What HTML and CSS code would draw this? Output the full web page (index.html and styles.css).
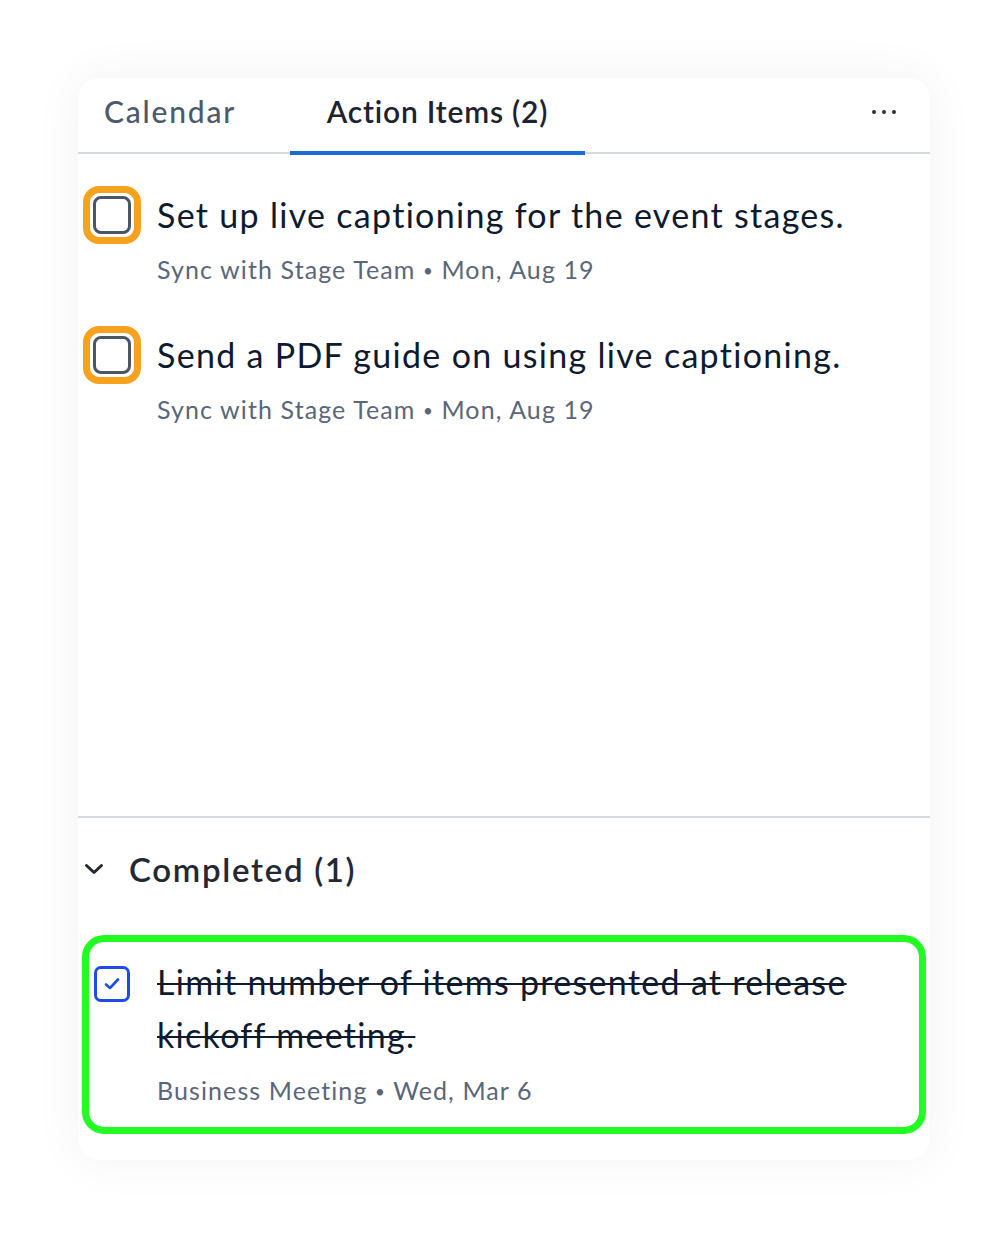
FILE: index.html
```html
<!DOCTYPE html>
<html lang="en">
<head>
<meta charset="utf-8">
<title>Action Items</title>
<link rel="stylesheet" href="styles.css">
</head>
<body>
<div class="card">
  <div class="tabs">
    <div class="tab tab-calendar">Calendar</div>
    <div class="tab tab-active">Action Items (2)</div>
    <div class="tabs-spacer"></div>
    <div class="more" aria-label="More"><span></span><span></span><span></span></div>
  </div>

  <div class="list">
    <div class="item">
      <div class="ring"><div class="box"></div></div>
      <div class="text">
        <div class="title">Set up live captioning for the event stages.</div>
        <div class="meta">Sync with Stage Team <span class="sep">•</span> Mon, Aug 19</div>
      </div>
    </div>
    <div class="item">
      <div class="ring"><div class="box"></div></div>
      <div class="text">
        <div class="title">Send a PDF guide on using live captioning.</div>
        <div class="meta">Sync with Stage Team <span class="sep">•</span> Mon, Aug 19</div>
      </div>
    </div>
  </div>

  <div class="completed">
    <div class="completed-head">
      <svg class="chevron" width="20" height="12" viewBox="0 0 20 12"><path d="M2.5 2.5 L10 9.5 L17.5 2.5" fill="none" stroke="#232833" stroke-width="3" stroke-linecap="round" stroke-linejoin="round"/></svg>
      <span>Completed (1)</span>
    </div>
    <div class="done-frame">
      <div class="done-item">
        <div class="box box-checked">
          <svg width="18" height="16" viewBox="0 0 18 16"><path d="M3 8.5 L7 12 L15 3.5" fill="none" stroke="#1f4be6" stroke-width="2.6" stroke-linecap="round" stroke-linejoin="round"/></svg>
        </div>
        <div class="text">
          <div class="title title-done">Limit number of items presented at release kickoff meeting.</div>
          <div class="meta meta-done">Business Meeting <span class="sep">•</span> Wed, Mar 6</div>
        </div>
      </div>
    </div>
  </div>
</div>
</body>
</html>
```

FILE: styles.css
```css
html, body {
  margin: 0;
  padding: 0;
  background: #ffffff;
}

body {
  font-family: "Lato", "Noto Sans", sans-serif;
  color: #0f1a2e;
  width: 1008px;
  height: 1240px;
  overflow: hidden;
}

.card {
  margin: 78px 0 0 78px;
  width: 852px;
  height: 1082px;
  background: #ffffff;
  border-radius: 22px;
  box-shadow: 0 0 50px rgba(0, 0, 0, 0.055);
  display: flex;
  flex-direction: column;
  overflow: hidden;
}

.tabs {
  height: 74px;
  border-bottom: 2px solid #d5d9e0;
  display: flex;
  align-items: stretch;
  flex-shrink: 0;
}

.tab {
  font-size: 30px;
  display: flex;
  align-items: center;
  padding-bottom: 9px;
  position: relative;
  box-sizing: border-box;
}

.tab-calendar {
  width: 212px;
  padding-left: 26px;
  color: #4d596c;
  font-weight: 500;
  letter-spacing: 1.8px;
}

.tab-active {
  width: 295px;
  justify-content: center;
  color: #1d2330;
  font-weight: 600;
  letter-spacing: 0.8px;
}

.tab-active::after {
  content: "";
  position: absolute;
  left: 0;
  right: 0;
  bottom: -3px;
  height: 4px;
  background: #1a6ad8;
}

.tabs-spacer {
  flex: 1;
}

.more {
  display: flex;
  align-items: center;
  gap: 6px;
  padding-right: 34px;
  padding-bottom: 7px;
}

.more span {
  width: 4px;
  height: 4px;
  border-radius: 50%;
  background: #2a303b;
}

.list {
  flex: 1;
  padding: 32px 0 0 5px;
  display: flex;
  flex-direction: column;
  gap: 40px;
}

.item {
  display: flex;
  align-items: flex-start;
  gap: 16px;
}

.ring {
  width: 58px;
  height: 58px;
  box-sizing: border-box;
  border: 7px solid #f7a21e;
  border-radius: 16px;
  padding: 3px;
  flex-shrink: 0;
}

.box {
  width: 38px;
  height: 38px;
  box-sizing: border-box;
  border: 3px solid #4b5565;
  border-radius: 8px;
  background: #ffffff;
}

.text {
  padding-top: 9px;
}

.title {
  font-size: 34px;
  line-height: 40px;
  letter-spacing: 1.3px;
  color: #0f1a2e;
}

.meta {
  font-size: 25px;
  line-height: 30px;
  letter-spacing: 1.1px;
  color: #5b6679;
  margin-top: 19px;
}

.sep {
  font-size: 17px;
  vertical-align: 2px;
}

.completed {
  border-top: 2px solid #d5d9e0;
  padding: 31px 4px 26px 4px;
  flex-shrink: 0;
}

.completed-head {
  display: flex;
  align-items: center;
  gap: 25px;
  padding-left: 4px;
  font-size: 33px;
  line-height: 40px;
  font-weight: 600;
  letter-spacing: 1.7px;
  color: #232833;
}

.chevron {
  display: block;
  margin-left: -2px;
}

.done-frame {
  margin-top: 46px;
  border: 7px solid #22fc22;
  border-radius: 22px;
  padding: 13px 20px 20px 5px;
}

.done-item {
  display: flex;
  align-items: flex-start;
  gap: 27px;
}

.box-checked {
  width: 36px;
  height: 36px;
  border-color: #1f4be6;
  border-radius: 7px;
  margin-top: 11px;
  display: flex;
  align-items: center;
  justify-content: center;
  flex-shrink: 0;
}

.box-checked svg {
  display: block;
}

.done-item .text {
  padding-top: 0;
}

.title-done {
  line-height: 53px;
  text-decoration: line-through;
  text-decoration-thickness: 2px;
  width: 710px;
}

.meta-done {
  margin-top: 14px;
}
```
